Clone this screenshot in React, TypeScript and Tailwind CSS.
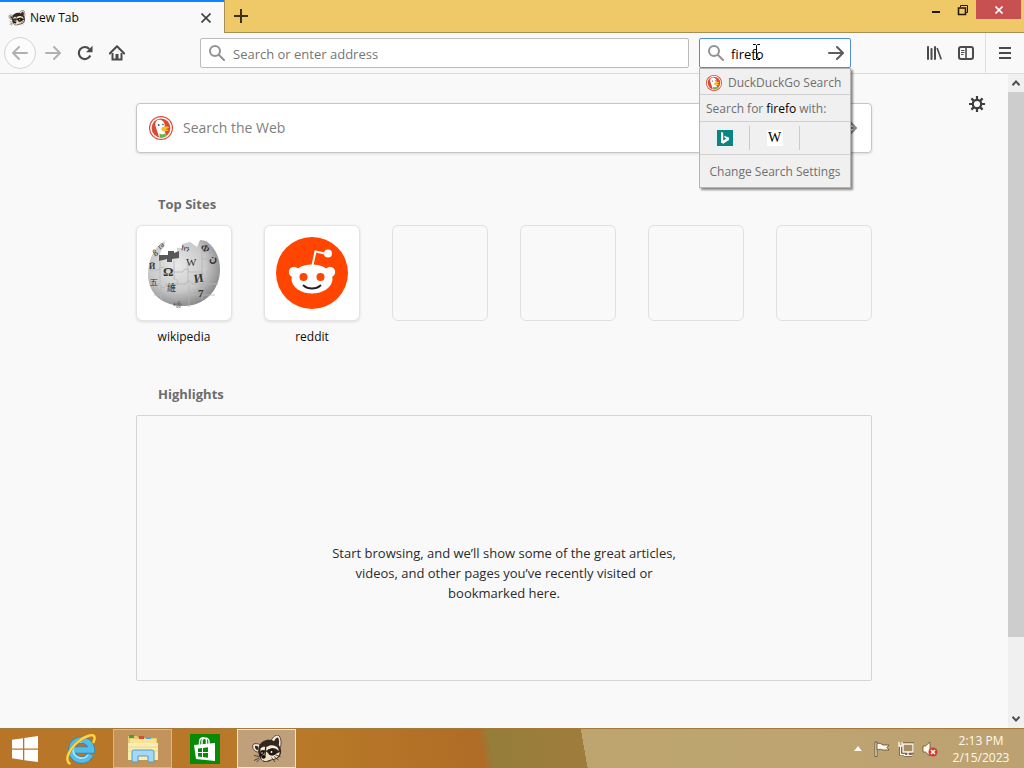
import type { ReactNode } from 'react'
import { clsx } from 'clsx'

const topSites = [
  { id: 'wikipedia', label: 'wikipedia', icon: <WikipediaGlobe /> },
  { id: 'reddit', label: 'reddit', icon: <RedditLogo /> },
]

const emptySites = ['empty-1', 'empty-2', 'empty-3', 'empty-4']

interface IconButtonProps {
  label: string
  className?: string
  children: ReactNode
}

function IconButton({ label, className, children }: IconButtonProps) {
  return (
    <button
      type="button"
      aria-label={label}
      className={clsx('flex size-8 shrink-0 items-center justify-center', className ?? 'text-[#4a4a4b]')}
    >
      {children}
    </button>
  )
}

function Magnifier() {
  return (
    <svg viewBox="0 0 16 16" className="size-4 shrink-0 text-[#929292]" fill="none" stroke="currentColor" strokeWidth="2">
      <circle cx="6" cy="6" r="5" />
      <path d="M9.8 9.8 15 15" strokeLinecap="round" />
    </svg>
  )
}

function ArrowRight({ className }: { className?: string }) {
  return (
    <svg viewBox="0 0 16 16" className={clsx('size-4 shrink-0', className)} fill="none" stroke="currentColor" strokeWidth="2" strokeLinecap="round" strokeLinejoin="round">
      <path d="M1 8h13.5M9 2l6 6-6 6" />
    </svg>
  )
}

function DuckLogo({ className }: { className?: string }) {
  return (
    <svg viewBox="0 0 24 24" className={clsx('shrink-0', className)}>
      <circle cx="12" cy="12" r="12" fill="#dc4a32" />
      <circle cx="12" cy="12" r="10.8" fill="#fff" />
      <circle cx="12" cy="12" r="9.4" fill="#dc4a32" />
      <path d="M7.5 5c1.200-1.800 4.500-1.800 6.200 0 1.800 1.600 2.300 3.800 2 6.300-.2 1.800-.8 3 .3 5l1.200 3.300c-2 1.700-4.800 1.900-7.400.9-.3-3-2.900-8.100-3.400-11-.4-2 .1-3.300 1.100-4.500z" fill="#fff" />
      <path d="M12.500 11.600c1.500-.8 6-1.500 7.400-.6.700.7-2 1.500-3 2.200 1 .6 2.800.3 2.700 1-.3 1.200-6 1.500-6.800.4-.5-.8-.8-2.200-.3-3z" fill="#fdb92c" />
      <path d="m10.500 17.500 2.600 1 3.500-1 .6 3-3 1-3.400.2z" fill="#65b54a" />
      <circle cx="9.700" cy="9" r=".9" fill="#2d4f8e" />
      <circle cx="14" cy="8.500" r=".8" fill="#2d4f8e" />
    </svg>
  )
}

function Raccoon({ className }: { className?: string }) {
  return (
    <svg viewBox="0 0 32 28" className={className}>
      {/* ears */}
      <path d="M2 9.500C4 8 9 8.500 10 11l-2.500 6C4 17.500.5 13 2 9.500z" fill="#fbeeda" stroke="#33281f" strokeWidth=".8" />
      <path d="M4 11c1.500-.5 3.500.5 3.500 2l-1 2.500C5 15 3.500 13 4 11z" fill="#33281f" />
      <path d="M20 6c1-3 4-6 7-6 3 1.500 4 9 2 13l-4 1z" fill="#fbeeda" stroke="#33281f" strokeWidth=".8" />
      <path d="M23 6.500C24 4 25.500 2.500 27 2.500c1.300 2 1.500 5.500.5 8l-2 1z" fill="#33281f" />
      {/* head */}
      <path d="M8 11c2-5 9-8 15-5 5 2.500 8 8 7 12-1 4.500-5 7-9 7-3 2-8 3-10 .5C7.500 23 6.500 15 8 11z" fill="#332820" />
      <path d="M9.500 13.500c1.500-1.500 3.500-2 5-1.500l2-.5c3-2 8-1.500 10.500 1.500l1 3c-3-3-7-4-9.500-2l-3 1.500-3-.5c-1.500 0-2.500 1-3 3z" fill="#fbeeda" />
      <path d="M28.500 17c.5 3-2 6-5.500 7-2 .6-4 .5-6 1.500-1.500 1-4.500 1-6-.5-1.500-2-.8-4 1.500-5.500l2-3.500 2.500 2c1.500 2.500 4.500 3 7 1.500z" fill="#f1dfc7" />
      <path d="M17 14.500c3-1.500 7 0 8.500 3-1 3-5 4-7.500 2zM9.500 16c1.500-1.500 3.500-.5 4 1l-2 3-3 1z" fill="#211914" />
      <path d="M10.500 21c1-1.200 3.500-1.200 4.200 0 .3 1.700-1 2.700-2.200 2.700-1.300-.2-2.200-1.400-2-2.700z" fill="#16110e" />
      <path d="M14 20.500 14.800 11M17 11l1.500-6" stroke="#332820" strokeWidth="1.400" />
      <circle cx="20.500" cy="17" r=".9" fill="#fff" />
      <circle cx="11" cy="18" r=".7" fill="#fff" />
      <path d="m8 21.500-5-1m5 2.500-5 2.500m5.500-1.300L5.500 27m15-4.500L24 27m-1-5.500 4.500 3.500m-3-5 5 1.500" stroke="#33281f" strokeWidth=".8" />
    </svg>
  )
}

function WikipediaGlobe() {
  return (
    <svg viewBox="0 0 76 76" className="size-[76px]">
      <defs>
        <radialGradient id="globe" cx="40%" cy="38%" r="66%">
          <stop offset="0" stopColor="#e9e9e9" />
          <stop offset=".6" stopColor="#c9c9c9" />
          <stop offset="1" stopColor="#858585" />
        </radialGradient>
      </defs>
      <path d="m19 6-1 6-3 4-2 6h11l2-4h5v-5h5V9l8-2 7 5 3-7 6 1c9 6 14 17 14 28 0 22-16 37-36 37S2 60 2 39C2 23 9 12 19 6z" fill="url(#globe)" />
      <path d="M13 20h9v-4h6v2l5-2v7l-7 1v3h-5v-3l-8 2z" fill="#585858" />
      <path
        d="M3 35h10c0-4 6-4 6 0h9v-9M28 35v9c5 0 5 6 0 6v10M28 37h9c0-4 6-4 6 0h13V14M56 37v10c5 0 5 6 0 6v12M4 49h10c0 5 6 5 6 0h20c0-4 6-4 6 0h26M42 23v26M43 50v22M14 26v22M15 50v15M8 60h61M56 24h14"
        fill="none"
        stroke="#b5b5b5"
        strokeWidth=".8"
      />
      <g fill="#343434" fontFamily="'Liberation Serif', serif">
        <text x="17" y="41" fontSize="13" fontWeight="bold">Ω</text>
        <text x="40" y="31" fontSize="11">W</text>
        <text x="48" y="47" fontSize="12" fontWeight="bold" transform="rotate(-8 53 43)">И</text>
        <text x="21" y="56" fontSize="9" fontFamily="'Noto Sans CJK SC', sans-serif">維</text>
        <text x="52" y="62" fontSize="11" fontWeight="bold">7</text>
        <text x="63" y="27" fontSize="11" fontWeight="bold">ن</text>
        <text x="55" y="16" fontSize="10" fontWeight="bold" transform="rotate(22 58 13)">Ф</text>
        <text x="36" y="16" fontSize="8" transform="rotate(12 40 13)">ክን</text>
        <text x="7" y="21" fontSize="9" transform="rotate(-30 9 18)">ß</text>
        <text x="12" y="13" fontSize="8" transform="rotate(-40 15 11)">ra</text>
        <text x="3" y="34" fontSize="8" fontWeight="bold">Й</text>
        <text x="4" y="50" fontSize="8">五</text>
        <text x="27" y="71" fontSize="6">ಕಿஇ</text>
      </g>
    </svg>
  )
}

function RedditLogo() {
  return (
    <svg viewBox="0 0 72 72" className="size-[72px]">
      <circle cx="36" cy="36" r="36" fill="#ff4500" />
      <path d="m36.500 28 3-13.500L51 17" fill="none" stroke="#fff" strokeWidth="2" />
      <circle cx="52" cy="16.500" r="4" fill="#fff" />
      <circle cx="18" cy="35" r="5.200" fill="#fff" />
      <circle cx="54" cy="35" r="5.200" fill="#fff" />
      <ellipse cx="36" cy="42" rx="20.500" ry="14.500" fill="#fff" />
      <circle cx="27.500" cy="40" r="4" fill="#ff4500" />
      <circle cx="44.500" cy="40" r="4" fill="#ff4500" />
      <path d="M27.500 48.500c4.500 4 12.500 4 17 0" fill="none" stroke="#222" strokeWidth="1.800" strokeLinecap="round" />
    </svg>
  )
}

function TabStrip() {
  return (
    <header className="flex h-[33px] shrink-0 bg-[#efc968]">
      <div className="flex w-56 items-center border-t-2 border-[#0a84ff] bg-[#f9f9fa] px-2">
        <Raccoon className="h-4 w-[18px]" />
        <span className="ml-1 flex-1 text-xs text-[#0c0c0d]">New Tab</span>
        <button type="button" aria-label="Close tab" className="flex size-5 items-center justify-center text-[#3f3f40]">
          <svg viewBox="0 0 10 10" className="size-2.5" fill="none" stroke="currentColor" strokeWidth="1.6">
            <path d="m.5.5 9 9m0-9-9 9" />
          </svg>
        </button>
      </div>
      <div className="flex flex-1 items-start justify-between border-b border-l border-[#a68f56]">
        <button type="button" aria-label="Open a new tab" className="flex size-8 items-center justify-center text-[#3b3015]">
          <svg viewBox="0 0 14 14" className="size-3.5" fill="none" stroke="currentColor" strokeWidth="2">
            <path d="M7 0v14M0 7h14" />
          </svg>
        </button>
        <div className="flex text-[#231b08]">
          <button type="button" aria-label="Minimize" className="flex h-5 w-[26px] items-center justify-center">
            <svg viewBox="0 0 10 10" className="size-2.5">
              <path d="M1 6h8v2H1z" fill="currentColor" />
            </svg>
          </button>
          <button type="button" aria-label="Restore" className="flex h-[19px] w-[27px] items-center justify-center">
            <svg viewBox="0 0 12 12" className="size-3" fill="none" stroke="currentColor">
              <path d="M3.500 3V1.500h7v7H9" />
              <path d="M1.500 4h7v6.500h-7z" strokeWidth="1.600" />
            </svg>
          </button>
          <button type="button" aria-label="Close" className="mr-[3px] flex h-[19px] w-[45px] items-center justify-center bg-[#c75050] text-white">
            <svg viewBox="0 0 8 8" className="size-2" fill="none" stroke="currentColor" strokeWidth="1.600">
              <path d="m.5.5 7 7m0-7-7 7" />
            </svg>
          </button>
        </div>
      </div>
    </header>
  )
}

function SearchPopup() {
  return (
    <div className="absolute -left-px top-full z-10 mt-px w-[152px] border border-[#b5b5b5] bg-[#f0f0f0] text-xs text-[#6f6f70] shadow-[2px_2px_2px_rgba(0,0,0,0.45)]">
      <button type="button" className="flex h-[26px] w-full items-center gap-1.5 whitespace-nowrap border-b border-[#d0d0d0] pl-1.5 pt-0.5">
        <DuckLogo className="size-4" />
        DuckDuckGo Search
      </button>
      <p className="flex h-[27px] items-center gap-[3px] whitespace-nowrap border-b border-[#d0d0d0] pl-1.5 pt-0.5">
        Search for <span className="text-black">firefo</span> with:
      </p>
      <div className="flex h-[33px] items-center border-b border-[#d0d0d0]">
        <button type="button" aria-label="Bing" className="flex h-6 w-[50px] items-center justify-center border-r border-[#cacaca]">
          <svg viewBox="0 0 16 16" className="size-4">
            <path d="M0 0h16v16H0z" fill="#0b8484" />
            <path d="m4 2 2.200.8v7.700l3.200-1.800-1.500-.7-1-2.300L12 7.400v2.700l-5.800 3.600L4 12.400z" fill="#fff" />
          </svg>
        </button>
        <button type="button" aria-label="Wikipedia" className="flex h-6 w-[50px] items-center justify-center border-r border-[#cacaca]">
          <span className="flex size-4 items-center justify-center bg-white font-['Liberation_Serif',serif] text-sm text-black">W</span>
        </button>
      </div>
      <button type="button" className="h-8 w-full whitespace-nowrap pt-0.5 text-center">
        Change Search Settings
      </button>
    </div>
  )
}

function Toolbar() {
  return (
    <nav className="flex h-[41px] shrink-0 items-center border-b border-[#dcdcdd] bg-[#f9f9fa] pl-1 pr-[3px]">
      <IconButton label="Back" className="mr-px rounded-full border border-[#d4d4d5] bg-[#fcfcfc] text-[#b1b1b2]">
        <ArrowRight className="rotate-180" />
      </IconButton>
      <IconButton label="Forward" className="text-[#b1b1b2]">
        <ArrowRight />
      </IconButton>
      <IconButton label="Reload">
        <svg viewBox="0 0 16 16" className="size-4" fill="none" stroke="currentColor" strokeWidth="2.200">
          <path d="M13.300 10.500A6 6 0 1 1 12.300 4" />
          <path d="M15.500.8v6.400H9z" fill="currentColor" stroke="none" />
        </svg>
      </IconButton>
      <IconButton label="Home">
        <svg viewBox="0 0 16 16" className="size-4" fill="none" stroke="currentColor" strokeWidth="2">
          <path d="M.8 8.500 8 1.300l7.200 7.200" strokeLinecap="round" strokeLinejoin="round" />
          <path d="M3.500 8v6.500h9V8" />
          <path d="M6.500 9h3v5h-3z" fill="currentColor" stroke="none" />
        </svg>
      </IconButton>
      <label className="ml-[67px] flex h-[30px] flex-1 items-center gap-2 rounded-xs border border-[#bcbcbd] bg-white pl-2">
        <Magnifier />
        <input
          type="text"
          aria-label="Address"
          placeholder="Search or enter address"
          className="min-w-0 flex-1 pt-1 text-[13px] outline-none placeholder:text-[#757575]"
        />
      </label>
      <div className="relative ml-2.5 mr-[67px] flex h-[30px] w-[152px] items-center rounded-xs border border-[#4f8fd0] bg-white pl-2 pr-1.5">
        <Magnifier />
        <input
          type="text"
          aria-label="Search"
          defaultValue="firefo"
          className="ml-[7px] min-w-0 flex-1 pt-1 text-[13px] text-black outline-none"
        />
        <button type="button" aria-label="Go" className="text-[#5c5c5d]">
          <ArrowRight />
        </button>
        <svg viewBox="0 0 9 16" className="pointer-events-none absolute left-[52px] top-[5px] h-4 w-[9px]" fill="none" stroke="#000">
          <path d="M1 .5h2.500l1 1 1-1H8M4.500 1.500v13M1 15.500h2.500l1-1 1 1H8" />
        </svg>
        <SearchPopup />
      </div>
      <IconButton label="Library">
        <svg viewBox="0 0 16 16" className="size-4" fill="none" stroke="currentColor" strokeWidth="2" strokeLinecap="round">
          <path d="M2 2v12M5.500 4v10M9 2v12" />
          <path d="m11.300 3.500 3.700 10.300" strokeWidth="1.600" />
        </svg>
      </IconButton>
      <IconButton label="Sidebars">
        <svg viewBox="0 0 16 14" className="h-3.5 w-4" fill="none" stroke="currentColor">
          <rect x="1" y="1" width="14" height="12" rx="2" strokeWidth="2" />
          <path d="M8 1v12" strokeWidth="1.600" />
          <path d="M3 4.500h3.500M3 6.500h3.500M3 8.500h2.500" />
        </svg>
      </IconButton>
      <span className="mx-[3px] h-full w-px bg-[#e0e0e1]" />
      <IconButton label="Open menu">
        <svg viewBox="0 0 12 12" className="size-3" fill="none" stroke="currentColor" strokeWidth="2">
          <path d="M0 1h12M0 6h12M0 11h12" />
        </svg>
      </IconButton>
    </nav>
  )
}

function NewTabPage() {
  return (
    <main className="relative flex-1 overflow-hidden">
      <button type="button" aria-label="Customize your New Tab page" className="absolute right-[23px] top-[22px] text-[#3e3e3f]">
        <svg viewBox="0 0 16 16" className="size-4" fill="none" stroke="currentColor" strokeWidth="2.200">
          <circle cx="8" cy="8" r="4.200" />
          <path d="M8 0v4M8 12v4M0 8h4M12 8h4M2.400 2.400l2.700 2.700M10.900 10.900l2.700 2.700M2.400 13.600l2.700-2.700M10.900 5.100l2.700-2.700" />
        </svg>
      </button>
      <div className="mx-auto w-[736px] max-w-full pt-[29px]">
        <label className="flex h-[50px] items-center rounded border border-[#c6c6c7] bg-white pl-3 pr-3.5 shadow-[0_1px_3px_rgba(0,0,0,0.12)]">
          <DuckLogo className="size-6" />
          <input
            type="text"
            aria-label="Search the Web"
            placeholder="Search the Web"
            className="ml-2.5 min-w-0 flex-1 text-sm outline-none placeholder:text-[#808080]"
          />
          <ArrowRight className="text-[#8a8a8b]" />
        </label>

        <section>
          <h2 className="mt-[41px] pl-[22px] text-[13px] font-bold leading-5 text-[#6c6c6d]">Top Sites</h2>
          <ul className="mt-[11px] flex justify-between">
            {topSites.map((site) => (
              <li key={site.id}>
                <a href={`#${site.id}`} className="block w-24 text-center text-xs text-[#0c0c0d]">
                  <span className="flex size-24 items-center justify-center rounded-md border border-[#e4e4e5] bg-white shadow-[0_1px_3px_rgba(0,0,0,0.12)]">
                    {site.icon}
                  </span>
                  <span className="mt-2 block">{site.label}</span>
                </a>
              </li>
            ))}
            {emptySites.map((id) => (
              <li key={id} className="size-24 rounded-md border border-[#e0e0e1]" />
            ))}
          </ul>
        </section>

        <section>
          <h2 className="mt-[39px] pl-[22px] text-[13px] font-bold leading-5 text-[#6c6c6d]">Highlights</h2>
          <div className="mt-[11px] flex h-[266px] justify-center rounded-xs border border-[#d4d4d5] pt-[127px]">
            <p className="w-[360px] text-center text-[13px] leading-5 text-[#2a2a2b]">
              Start browsing, and we’ll show some of the great articles, videos, and other pages you’ve recently visited or
              bookmarked here.
            </p>
          </div>
        </section>
      </div>
    </main>
  )
}

function Scrollbar() {
  return (
    <div className="flex w-4 shrink-0 flex-col items-center bg-[#f0f0f0] text-[#505050]">
      <svg viewBox="0 0 8 6" className="my-1.5 h-1.5 w-2 shrink-0" fill="none" stroke="currentColor" strokeWidth="2">
        <path d="m.5 5.200 3.500-3.700 3.500 3.700" />
      </svg>
      <div className="h-5/6 w-full bg-[#cdcdcd]" />
      <svg viewBox="0 0 8 6" className="mb-1.5 mt-auto h-1.5 w-2 shrink-0" fill="none" stroke="currentColor" strokeWidth="2">
        <path d="m.5.800 3.500 3.700L7.500.8" />
      </svg>
    </div>
  )
}

function TaskbarIcon({ label, active, children }: { label: string; active?: 'open' | 'focused'; children: ReactNode }) {
  return (
    <button
      type="button"
      aria-label={label}
      className={clsx(
        'flex h-[39px] w-[59px] items-center justify-center border',
        !active && 'border-transparent',
        active === 'open' && 'border-[#dcb584] bg-[#c2935a]',
        active === 'focused' && 'border-[#f5e6cf] bg-[#c0a07a]',
      )}
    >
      {children}
    </button>
  )
}

function Taskbar() {
  return (
    <footer className="relative flex h-10 shrink-0 items-center border-t border-[#a4793c] bg-[linear-gradient(80deg,#b87528_0%,#b87a28_30%,#b06c26_47%,#957d3a_48%,#9f7c3c_57%,#bda56f_57%,#bca272_100%)]">
      <button type="button" aria-label="Start" className="flex h-full w-[51px] items-center pl-3">
        <svg viewBox="0 0 26 26" className="size-[26px]" fill="#fff">
          <path d="m0 3.800 11-1.600V12.500H0zM12.300 2 26 0v12.500H12.300zM0 13.800h11V24L0 22.300zM12.300 13.800H26V26l-13.700-1.800z" />
        </svg>
      </button>
      <div className="flex items-center gap-[3px]">
        <TaskbarIcon label="Internet Explorer">
          <svg viewBox="0 0 34 34" className="size-[34px]" fill="none">
            <path d="M26.500 22.500A10 10 0 1 1 27.500 18H9" stroke="#2c86b8" strokeWidth="7" />
            <path d="M26.500 22.500A10 10 0 1 1 27.500 18H9" stroke="#55bdea" strokeWidth="5.400" />
            <path d="M24 23A8.500 8.500 0 0 1 9 18c0-5 4-8.500 8.500-8.500" stroke="#a5e5fb" strokeWidth="1.800" />
            <path d="M5.500 31.500C0 27 6 16 15 9c7-5.500 14.500-7.500 15.500-4 .4 1.300 0 3-1 5" stroke="#c78d17" strokeWidth="3.200" strokeLinecap="round" />
            <path d="M5.500 31.500C0 27 6 16 15 9c7-5.500 14.500-7.500 15.500-4 .4 1.300 0 3-1 5" stroke="#ffd64a" strokeWidth="2.200" strokeLinecap="round" />
          </svg>
        </TaskbarIcon>
        <TaskbarIcon label="File Explorer" active="open">
          <svg viewBox="0 0 32 30" className="h-[30px] w-8">
            <path d="M1 2h9l2 2h18v20H1z" fill="#e9ca70" />
            <path d="M2 1h5v3H2z" fill="#3f9c53" />
            <path d="M12 2h5v3h-5z" fill="#d64d35" />
            <path d="M19 4h5v3h-5z" fill="#4aa5d8" />
            <path d="M3 5h26v19H3z" fill="#f6e299" />
            <path d="M1 9h30v17H1z" fill="#fbedb0" />
            <path d="M1 13h30M1 17h30" stroke="#eed587" />
            <path d="M5 28V18q0-2 2-2h18q2 0 2 2v10h-6v-6H11v6z" fill="#a5d8f4" stroke="#4f9dcc" />
          </svg>
        </TaskbarIcon>
        <TaskbarIcon label="Store">
          <svg viewBox="0 0 30 30" className="size-[30px]">
            <path d="M0 0h30v30H0z" fill="#078a08" />
            <path d="M9.500 11V8c0-5 7-6 7-1v3M12 11V7.500c0-5 7-4 7 0V10" fill="none" stroke="#fff" strokeWidth="1.400" />
            <path d="m4 11 21-2v18L6 25z" fill="#fff" />
            <path d="m8 14.500 4-.5v4H8zM13 13.900l5-.6V18h-5zM8 19h4v4l-4-.5zM13 19h5v4.700l-5-.6z" fill="#078a08" />
          </svg>
        </TaskbarIcon>
        <TaskbarIcon label="Browser" active="focused">
          <Raccoon className="h-7 w-8" />
        </TaskbarIcon>
      </div>
      <div className="ml-auto flex items-center text-[#fff8ee]">
        <button type="button" aria-label="Show hidden icons" className="flex w-6 justify-center">
          <svg viewBox="0 0 8 5" className="h-[5px] w-2">
            <path d="m4 0 4 5H0z" fill="currentColor" />
          </svg>
        </button>
        <button type="button" aria-label="Action Center" className="flex w-6 justify-center">
          <svg viewBox="0 0 16 16" className="size-4" stroke="#5b482d" strokeWidth=".8">
            <path d="M1 1h2v14.500H1z" fill="currentColor" />
            <path d="M3 2.500c3-1 4 .5 6 1.500h6l-2 2.500 2 2.500H9C7 8 6 8 3 9z" fill="currentColor" />
          </svg>
        </button>
        <button type="button" aria-label="Network" className="flex w-6 justify-center">
          <svg viewBox="0 0 16 16" className="size-4" fill="none">
            <path d="M5 3h10v8H5zM10 11v3M6 14.500h8M2.500 5v8H7" stroke="#574529" strokeWidth="3" />
            <path d="M5 3h10v8H5z" fill="#a58d65" stroke="currentColor" strokeWidth="1.400" />
            <path d="M10 11v3M6 14.500h8M2.500 5v8.500H7M1 1v4h3V1" stroke="currentColor" strokeWidth="1.400" />
          </svg>
        </button>
        <button type="button" aria-label="Volume muted" className="flex w-6 justify-center">
          <svg viewBox="0 0 16 16" className="size-4">
            <path d="M1 5h2.500L8 1v14l-4.500-4H1z" fill="currentColor" stroke="#665235" strokeWidth=".8" />
            <circle cx="11" cy="11" r="4.600" fill="#cf3f34" />
            <path d="m9 9 4 4m0-4-4 4" stroke="#fff" strokeWidth="1.500" />
          </svg>
        </button>
        <time className="w-[82px] pr-1 text-center text-xs leading-[17px]">
          2:13 PM
          <br />
          2/15/2023
        </time>
      </div>
    </footer>
  )
}

export default function App() {
  return (
    <div className="flex h-screen flex-col bg-[#f9f9fa] font-['Open_Sans','Noto_Sans',sans-serif]">
      <TabStrip />
      <Toolbar />
      <div className="flex min-h-0 flex-1">
        <NewTabPage />
        <Scrollbar />
      </div>
      <Taskbar />
    </div>
  )
}
